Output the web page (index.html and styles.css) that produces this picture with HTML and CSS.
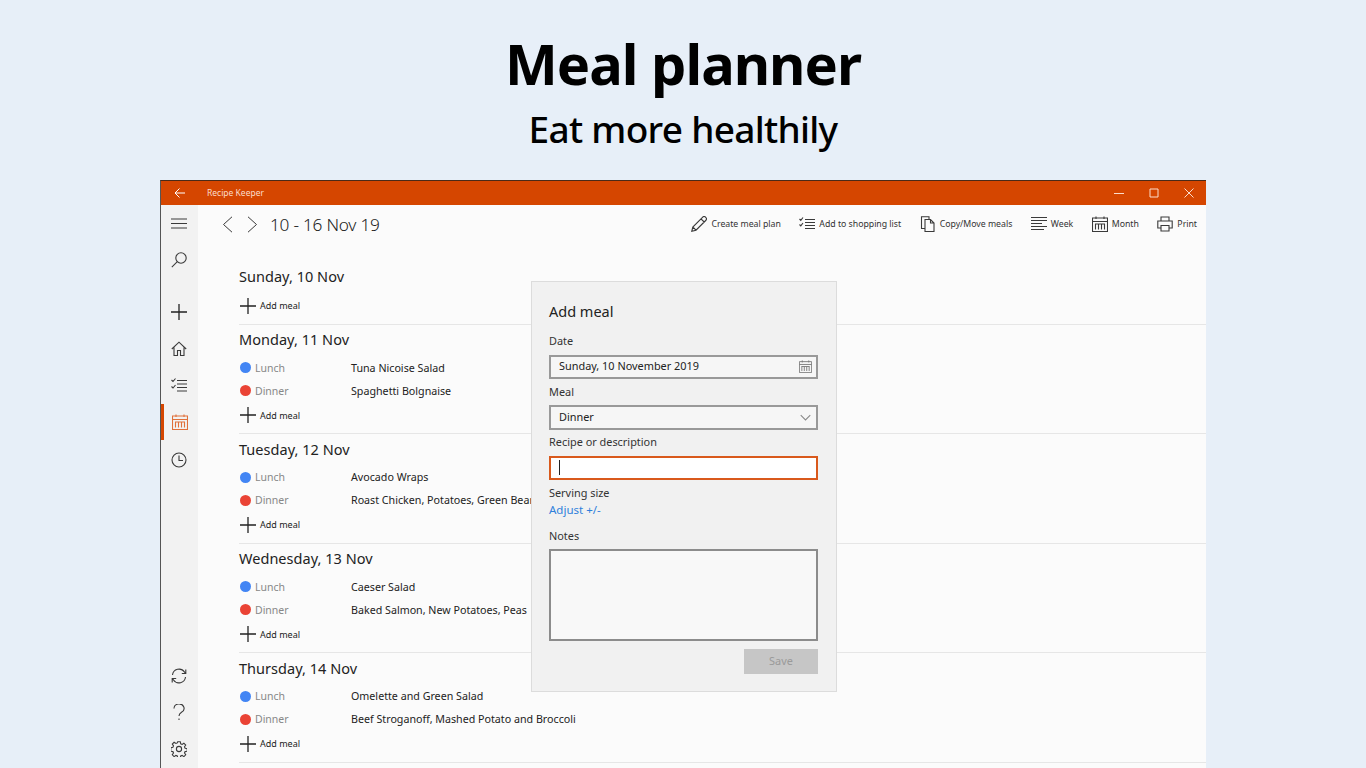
FILE: index.html
```html
<!DOCTYPE html>
<html lang="en">
<head>
<meta charset="utf-8">
<title>Meal planner</title>
<link rel="stylesheet" href="styles.css">
</head>
<body>
<header class="hero">
  <h1>Meal planner</h1>
  <h2>Eat more healthily</h2>
</header>
<div class="window">
  <div class="titlebar">
    <svg class="tb-back" viewBox="0 0 12 12"><path d="M1 6h10M5.500 1.500 1 6l4.500 4.500"/></svg>
    <span class="tb-title">Recipe Keeper</span>
    <span class="tb-controls">
      <svg viewBox="0 0 10 10"><path d="M0 5.500h10"/></svg>
      <svg viewBox="0 0 10 10"><path d="M1 1h8v8H1z"/></svg>
      <svg viewBox="0 0 10 10"><path d="m.5.500 9 9M9.500.500l-9 9"/></svg>
    </span>
  </div>
  <div class="body">
    <nav class="side">
      <div class="side-item"><svg class="ic" viewBox="0 0 16 16"><path d="M0 4h16M0 8.500h16M0 13h16"/></svg></div>
      <div class="side-item gap-after"><svg class="ic" viewBox="0 0 16 16"><circle cx="10" cy="6" r="5.200"/><path d="M6.300 9.700.8 15.200"/></svg></div>
      <div class="side-item"><svg class="ic plus" viewBox="0 0 16 16"><path d="M8 0v16M0 8h16"/></svg></div>
      <div class="side-item"><svg class="ic" viewBox="0 0 16 16"><path d="M.8 8 8 1.200 15.200 8M3 6.500v8h3.500v-5h3v5H13v-8"/></svg></div>
      <div class="side-item"><svg class="ic" viewBox="0 0 16 16"><path d="M6 3.500h10M6 7h10M6 10.500h10M6 14h10M.5 3l1.500 1.500L4.500 1.500M.5 9.500l1.500 1.500 2.500-3"/></svg></div>
      <div class="side-item active"><svg class="ic" viewBox="0 0 16 16"><path d="M.5 2h15v13.500H.5zM.5 5.500h15M4 .5V3M12 .5V3M3.500 8v5.500M6.500 8v5.500M9.500 8v5.500M12.500 8v5.500M3 8h10"/></svg></div>
      <div class="side-item clock"><svg class="ic" viewBox="0 0 16 16"><circle cx="8" cy="8" r="7"/><path d="M8 3.500V8.500h4"/></svg></div>
      <div class="side-item push"><svg class="ic" viewBox="0 0 16 16"><path d="M1.500 7a6.600 6.600 0 0 1 12-3l1 1.500M14.500 9a6.600 6.600 0 0 1-12 3l-1-1.500M14.800 1.500v4h-4M1.200 14.500v-4h4"/></svg></div>
      <div class="side-item"><svg class="ic" viewBox="0 0 16 16"><path d="M3 4.500a5 4.500 0 1 1 7.500 3.800C9 9.300 8 10 8 12M8 14.500V16"/></svg></div>
      <div class="side-item"><svg class="ic" viewBox="0 0 16 16"><circle cx="8" cy="8" r="2.600"/><path d="M6.700.7h2.600l.4 2.100 1.400.6 1.800-1.200 1.800 1.800-1.200 1.800.6 1.400 2.100.4v2.600l-2.100.4-.6 1.400 1.200 1.800-1.800 1.800-1.800-1.200-1.400.6-.4 2.100H6.700l-.4-2.100-1.400-.6-1.800 1.200-1.800-1.800 1.200-1.800-.6-1.400-2.100-.4V6.700l2.100-.4.6-1.400-1.200-1.800 1.800-1.800 1.800 1.200 1.400-.6z"/></svg></div>
    </nav>
    <main class="main">
      <div class="toolbar">
        <div class="nav">
          <svg class="chev" viewBox="0 0 11 17"><path d="M10 .8 1.500 8.500l8.500 7.700"/></svg>
          <svg class="chev" viewBox="0 0 11 17"><path d="M1 .8l8.500 7.700L1 16.200"/></svg>
          <span class="range">10 - 16 Nov 19</span>
        </div>
        <div class="actions">
          <div class="action"><svg class="ic" viewBox="0 0 16 16"><path d="M.8 15.200 1.800 11 11.500 1.300a1.800 1.800 0 0 1 3.200 3.200L5 14.200zM1.800 11 5 14.200M10 2.800l3.200 3.200"/></svg>Create meal plan</div>
          <div class="action"><svg class="ic" viewBox="0 0 16 16"><path d="M6 3.500h10M6 6.500h10M6 9.500h10M6 12.500h10M.5 3l1.300 1.300L4 1.500M.5 8.500l1.300 1.300L4 7"/></svg>Add to shopping list</div>
          <div class="action"><svg class="ic" viewBox="0 0 16 16"><path d="M9 3V.8H1.500V12.500H5M5 3.500h5.500l3.500 3.500v8.500H5zM10.500 3.500V7H14"/></svg>Copy/Move meals</div>
          <div class="action"><svg class="ic" viewBox="0 0 16 16"><path d="M0 1.500h16M0 4.500h16M0 7.500h11M0 10.500h16M0 13.500h13"/></svg>Week</div>
          <div class="action"><svg class="ic" viewBox="0 0 16 16"><path d="M.5 2h15v13.500H.5zM.5 5.500h15M4 .5V3M12 .5V3M3.500 8v5.500M6.500 8v5.500M9.500 8v5.500M12.500 8v5.500M3 8h10"/></svg>Month</div>
          <div class="action"><svg class="ic" viewBox="0 0 16 16"><path d="M4 5V1h8v4M4 12H.8V5h14.400v7H12M4 9.500h8v5.500H4z"/></svg>Print</div>
        </div>
      </div>
      <div class="days">
        <section class="day first">
          <h3>Sunday, 10 Nov</h3>
          <div class="add"><svg class="ic plus" viewBox="0 0 16 16"><path d="M8 0v16M0 8h16"/></svg>Add meal</div>
        </section>
        <section class="day">
          <h3>Monday, 11 Nov</h3>
          <div class="row"><i class="dot lunch"></i><span class="meal">Lunch</span><span class="dish">Tuna Nicoise Salad</span></div>
          <div class="row"><i class="dot dinner"></i><span class="meal">Dinner</span><span class="dish">Spaghetti Bolgnaise</span></div>
          <div class="add"><svg class="ic plus" viewBox="0 0 16 16"><path d="M8 0v16M0 8h16"/></svg>Add meal</div>
        </section>
        <section class="day">
          <h3>Tuesday, 12 Nov</h3>
          <div class="row"><i class="dot lunch"></i><span class="meal">Lunch</span><span class="dish">Avocado Wraps</span></div>
          <div class="row"><i class="dot dinner"></i><span class="meal">Dinner</span><span class="dish">Roast Chicken, Potatoes, Green Beans</span></div>
          <div class="add"><svg class="ic plus" viewBox="0 0 16 16"><path d="M8 0v16M0 8h16"/></svg>Add meal</div>
        </section>
        <section class="day">
          <h3>Wednesday, 13 Nov</h3>
          <div class="row"><i class="dot lunch"></i><span class="meal">Lunch</span><span class="dish">Caeser Salad</span></div>
          <div class="row"><i class="dot dinner"></i><span class="meal">Dinner</span><span class="dish">Baked Salmon, New Potatoes, Peas</span></div>
          <div class="add"><svg class="ic plus" viewBox="0 0 16 16"><path d="M8 0v16M0 8h16"/></svg>Add meal</div>
        </section>
        <section class="day">
          <h3>Thursday, 14 Nov</h3>
          <div class="row"><i class="dot lunch"></i><span class="meal">Lunch</span><span class="dish">Omelette and Green Salad</span></div>
          <div class="row"><i class="dot dinner"></i><span class="meal">Dinner</span><span class="dish">Beef Stroganoff, Mashed Potato and Broccoli</span></div>
          <div class="add"><svg class="ic plus" viewBox="0 0 16 16"><path d="M8 0v16M0 8h16"/></svg>Add meal</div>
        </section>
      </div>
    </main>
  </div>
  <div class="dialog">
    <div class="dlg-title">Add meal</div>
    <label class="lbl l-date">Date</label>
    <div class="field"><span>Sunday, 10 November 2019</span><svg class="ic small" viewBox="0 0 16 16"><path d="M.5 2h15v13.500H.5zM.5 5.500h15M4 .5V3M12 .5V3M3.500 8v5.500M6.500 8v5.500M9.500 8v5.500M12.500 8v5.500M3 8h10"/></svg></div>
    <label class="lbl l-next">Meal</label>
    <div class="field"><span>Dinner</span><svg class="ic chevron" viewBox="0 0 12 12"><path d="M.8 3.500 6 8.700l5.200-5.200"/></svg></div>
    <label class="lbl l-next">Recipe or description</label>
    <div class="field focus"><i class="caret"></i></div>
    <div class="lbl l-serv">Serving size</div>
    <a class="link">Adjust +/-</a>
    <label class="lbl l-notes">Notes</label>
    <div class="notes"></div>
    <button class="save">Save</button>
  </div>
</div>
</body>
</html>
```
FILE: styles.css
```css
* { box-sizing: border-box; }
html, body { height: 768px; margin: 0; overflow: hidden; }
body {
  background: #e7eff8;
  font-family: "Noto Sans", "Open Sans", sans-serif;
  color: #222;
  display: flex;
  flex-direction: column;
  align-items: center;
}
.hero { height: 180px; width: 100%; text-align: center; color: #000; }
h1 { margin: 0; padding-top: 25px; font-size: 56px; line-height: 76px; font-weight: 700; letter-spacing: -1px; }
h2 { margin: 0; padding-top: 2px; font-size: 37px; line-height: 52px; font-weight: 500; letter-spacing: -.7px; }

.window {
  position: relative;
  width: 1046px;
  height: 588px;
  flex: none;
  background: #fbfbfb;
  border-left: 1px solid #555;
  border-top: 1px solid #4a2a18;
  display: flex;
  flex-direction: column;
  overflow: hidden;
}
.titlebar {
  height: 24px;
  flex: none;
  background: #d54600;
  display: flex;
  align-items: center;
  color: #fbdccb;
  font-size: 8.500px;
}
.tb-back { width: 12px; height: 12px; margin-left: 13px; fill: none; stroke: #fff; stroke-width: 1; }
.tb-title { margin-left: 21px; margin-bottom: 1px; }
.tb-controls { margin-left: auto; display: flex; gap: 25px; margin-right: 12px; }
.tb-controls svg { width: 10px; height: 10px; fill: none; stroke: #fbdccb; stroke-width: 1; }

.body { flex: 1; display: flex; min-height: 0; }
.ic { width: 16px; height: 16px; fill: none; stroke: #3a3a3a; stroke-width: 1.100; flex: none; }
.ic.plus { stroke: #222; stroke-width: 1.300; }
.side { width: 37px; flex: none; background: #f2f2f2; display: flex; flex-direction: column; padding-right: 1px; padding-bottom: 1px; }
.side-item { height: 36.500px; flex: none; display: flex; align-items: center; justify-content: center; }
.gap-after { margin-bottom: 16px; }
.clock { margin-top: 1.500px; }
.push { margin-top: auto; }
.side-item.active { border-left: 3px solid #d54600; padding-right: 3px; margin-right: -1px; }
.side-item.active .ic { stroke: #e0703a; }

.main { flex: 1; min-width: 0; display: flex; flex-direction: column; }
.toolbar { height: 38px; flex: none; display: flex; align-items: center; justify-content: space-between; padding: 0 9px 0 24px; }
.nav { display: flex; align-items: center; }
.chev { width: 11px; height: 17px; margin-right: 14px; fill: none; stroke: #3a3a3a; stroke-width: 1; }
.chev + .chev { margin-right: 12px; }
.range { font-size: 17.250px; font-weight: 300; color: #222; letter-spacing: -.25px; }
.actions { display: flex; gap: 18.500px; }
.action { display: flex; align-items: center; gap: 4px; font-size: 8.750px; color: #333; letter-spacing: -.02px; }

.days { flex: 1; padding: 19px 0 0 41px; display: flex; flex-direction: column; }
.day { flex: none; height: 109.500px; padding-top: 4.500px; border-bottom: 1px solid #e6e6e6; }
.day.first { height: 62.500px; padding-top: 4px; }
.day h3 { margin: 0 0 7px; font-size: 14.500px; line-height: 20px; font-weight: 400; color: #222; letter-spacing: .03px; }
.day.first h3 { margin-bottom: 7.500px; }
.row { height: 23px; display: flex; align-items: center; font-size: 10.700px; }
.dot { width: 11px; height: 11px; border-radius: 50%; margin: 0 4px 0 1px; flex: none; }
.lunch { background: #4285f4; }
.dinner { background: #ea4335; }
.meal { width: 96px; color: #888; flex: none; font-size: 10.500px; }
.dish { color: #222; white-space: nowrap; }
.add { height: 24px; margin-top: 1px; display: flex; align-items: center; gap: 4px; font-size: 9px; color: #222; padding-left: 1px; }

.dialog {
  position: absolute;
  left: 370px;
  top: 100px;
  width: 306px;
  height: 411px;
  background: #f1f1f1;
  border: 1px solid #dcdcdc;
  padding: 20px 18px 0 17px;
  display: flex;
  flex-direction: column;
  font-size: 10.900px;
  color: #333;
}
.dlg-title { font-size: 14.500px; line-height: 18px; color: #222; }
.lbl { line-height: 16px; height: 16px; }
.l-date { margin-top: 13px; margin-bottom: 5.500px; }
.l-next { margin-top: 4.500px; margin-bottom: 5.500px; }
.field {
  height: 24.500px;
  flex: none;
  border: 2px solid #999;
  background: #f6f6f6;
  display: flex;
  align-items: center;
  justify-content: space-between;
  padding: 0 4px 2px 8px;
  color: #222;
}
.field .small { width: 13px; height: 13px; stroke: #777; margin-top: 2px; }
.field .chevron { width: 11px; height: 11px; stroke: #888; margin-right: 1px; margin-top: 2px; }
.focus { background: #fff; border-color: #d9591c; justify-content: flex-start; padding-bottom: 0; }
.caret { width: 1px; height: 15px; background: #222; }
.l-serv { margin-top: 5px; }
.link { margin-top: 1px; line-height: 16px; color: #2f7fdb; font-size: 11.500px; }
.l-notes { margin-top: 10px; margin-bottom: 5px; }
.notes { height: 92px; flex: none; border: 2px solid #8c8c8c; background: #f8f8f8; }
.save {
  align-self: flex-end;
  margin-top: 8px;
  width: 74px;
  height: 24.500px;
  border: 0;
  background: #c6c6c6;
  color: #9a9a9a;
  font: inherit;
  padding: 0 0 2px;
}
```
